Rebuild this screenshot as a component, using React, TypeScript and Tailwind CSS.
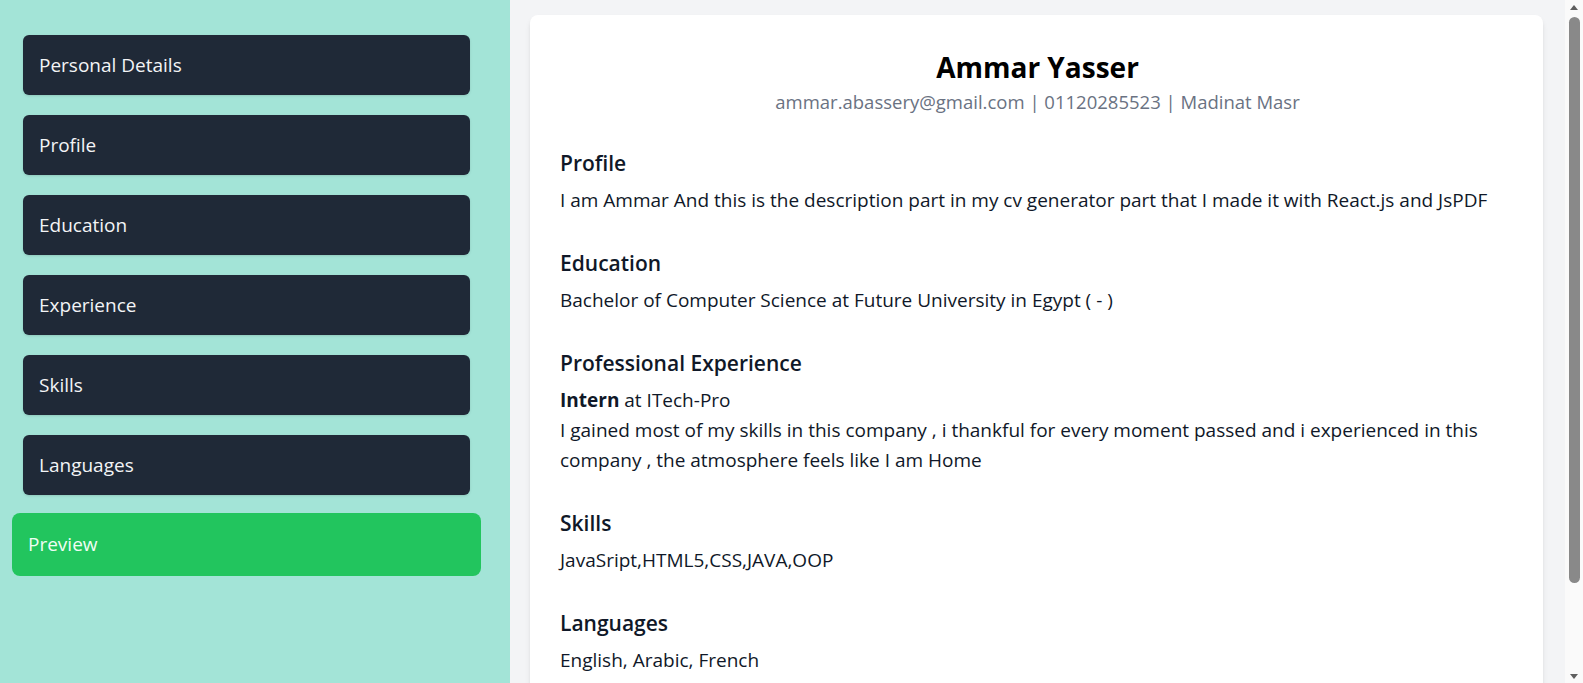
import React from 'react';

const steps = ['Personal Details', 'Profile', 'Education', 'Experience', 'Skills', 'Languages'];

type Section = {
  title: string;
  body: React.ReactNode;
};

const sections: Section[] = [
  {
    title: 'Profile',
    body: 'I am Ammar And this is the description part in my cv generator part that I made it with React.js and JsPDF',
  },
  {
    title: 'Education',
    body: 'Bachelor of Computer Science at Future University in Egypt ( - )',
  },
  {
    title: 'Professional Experience',
    body: (
      <>
        <span className="font-bold">Intern</span> at ITech-Pro
        <br />
        I gained most of my skills in this company , i thankful for every moment passed and i experienced in this
        company , the atmosphere feels like I am Home
      </>
    ),
  },
  {
    title: 'Skills',
    body: 'JavaSript,HTML5,CSS,JAVA,OOP',
  },
  {
    title: 'Languages',
    body: 'English, Arabic, French',
  },
];

function Scrollbar() {
  return (
    <div className="flex w-[18px] shrink-0 flex-col items-center bg-[#fafafa]">
      <svg width="10" height="8" viewBox="0 0 10 8" className="mt-[3px]">
        <path d="M1 7 L5 2 L9 7 Z" fill="#5f5f5f" />
      </svg>
      <div className="mt-[6px] h-[566px] w-[11px] rounded-full bg-[#898989]" />
      <div className="flex-1" />
      <svg width="10" height="8" viewBox="0 0 10 8" className="mb-[2px]">
        <path d="M1 1 L5 6 L9 1 Z" fill="#5f5f5f" />
      </svg>
    </div>
  );
}

export default function App() {
  return (
    <div className="flex h-screen overflow-hidden font-['Open_Sans',sans-serif]">
      <aside className="w-[510px] shrink-0 bg-[#a3e4d7] pl-[23px] pr-[40px] pt-[35px]">
        <nav className="flex flex-col gap-5">
          {steps.map((step) => (
            <button
              key={step}
              className="h-[60px] rounded-md bg-[#1f2937] px-4 text-left text-[19px] text-gray-100 shadow-sm"
            >
              {step}
            </button>
          ))}
        </nav>
        <button className="-ml-[11px] mt-[18px] h-[63px] w-[469px] rounded-lg bg-[#22c55e] px-4 text-left text-[19px] text-green-50">
          Preview
        </button>
      </aside>

      <main className="min-w-0 flex-1 bg-gray-100 pl-5 pr-[22px] pt-[15px]">
        <div className="rounded-lg bg-white pb-10 pl-[30px] pr-7 pt-[34px] shadow-md">
          <div className="mb-[33px] text-center">
            <h1 className="text-[28px] font-bold leading-9 text-black">Ammar Yasser</h1>
            <p className="mt-[3px] text-[18.5px] leading-7 text-gray-500">
              ammar.abassery@gmail.com | 01120285523 | Madinat Masr
            </p>
          </div>

          {sections.map((section) => (
            <section key={section.title} className="mb-[34px]">
              <h2 className="mb-2 text-[21px] font-semibold leading-7 text-gray-900">{section.title}</h2>
              <p className="text-[19px] leading-[30px] text-gray-900">{section.body}</p>
            </section>
          ))}
        </div>
      </main>

      <Scrollbar />
    </div>
  );
}
